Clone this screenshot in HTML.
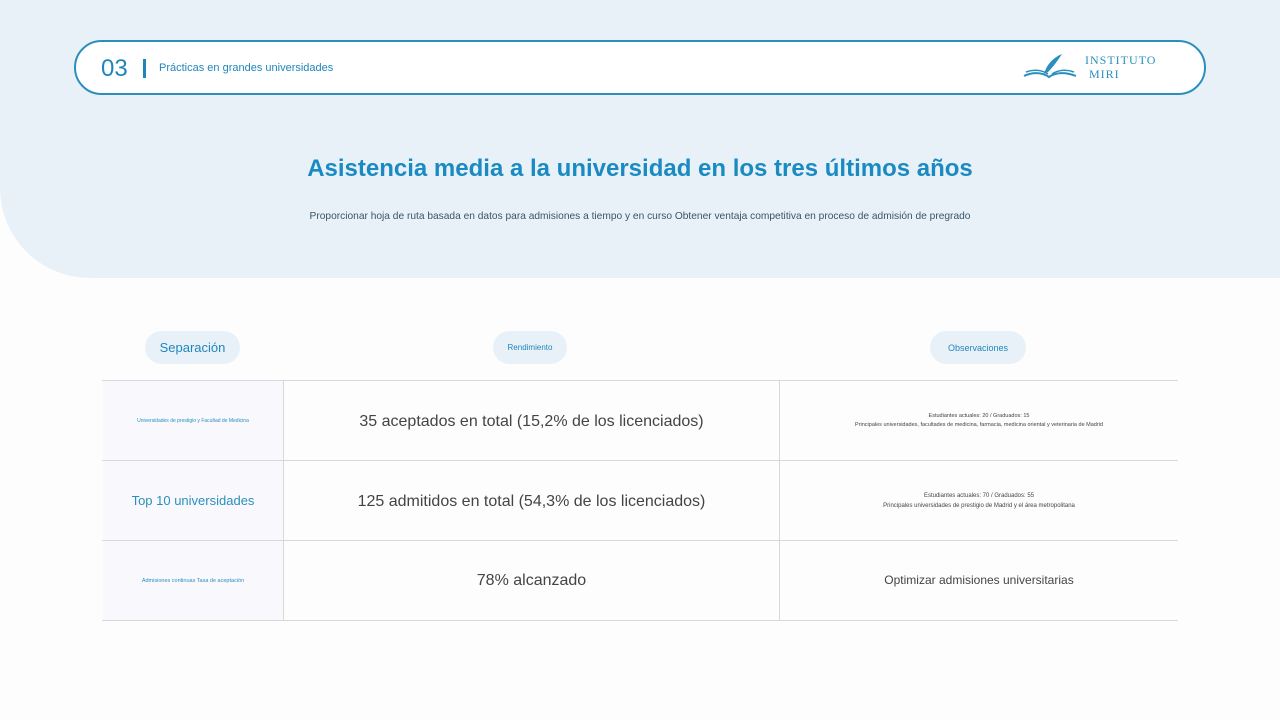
<!DOCTYPE html>
<html><head><meta charset="utf-8"><style>
*{margin:0;padding:0;box-sizing:border-box}
body{width:1280px;height:720px;background:#fdfdfe;font-family:"Liberation Sans",sans-serif;position:relative;overflow:hidden}
.top{position:absolute;left:0;top:0;width:1280px;height:278px;background:#e9f1f8;border-bottom-left-radius:90px}
.hdr{position:absolute;left:74px;top:40px;width:1132px;height:55px;border:2px solid #2b8fbd;border-radius:28px;background:#fff}
.num{position:absolute;left:25px;top:13px;font-size:24px;color:#1f86bb}
.bar{position:absolute;left:67px;top:17px;width:3px;height:19px;background:#1f86bb}
.sub{position:absolute;left:83px;top:20px;font-size:11px;color:#1f86bb}
.logo{position:absolute;left:1085px;top:53px;font-family:"Liberation Serif",serif;font-size:12px;color:#2a8fbd;letter-spacing:1px;line-height:14px}
h1{position:absolute;top:155px;left:0;width:1280px;text-align:center;font-size:24px;color:#1a8bc2;font-weight:bold}
.desc{position:absolute;top:211px;left:0;width:1280px;text-align:center;font-size:10.2px;color:#3a5566}
.pill{position:absolute;top:331px;height:33px;border-radius:17px;background:#e9f1f8;color:#1f86bb;display:flex;align-items:center;justify-content:center}
.line{position:absolute;left:102px;width:1076px;height:1px;background:#d8d8dc}
.v{position:absolute;top:380px;width:1px;height:240px;background:#d8d8dc}
.c1{position:absolute;left:103px;width:180px;height:79px;background:#f9f8fd;display:flex;align-items:center;justify-content:center;color:#2a8fbd;text-align:center}
.cell{position:absolute;display:flex;align-items:center;justify-content:center;text-align:center;color:#444}
</style></head><body>
<div class="top"></div>
<div class="hdr"><div class="num">03</div><div class="bar"></div><div class="sub">Prácticas en grandes universidades</div></div>
<svg style="position:absolute;left:1022px;top:52px" width="56" height="28" viewBox="0 0 56 28">
<path d="M22 22 C24 14 30 6 40 2 C36 8 32 14 26 20 Z" fill="#2a8fbd"/>
<path d="M2 24 C10 20 20 20 27 25 C34 20 44 20 54 24" stroke="#2a8fbd" stroke-width="2" fill="none"/>
<path d="M4 20 C12 17 20 18 26 22 M30 22 C36 18 44 17 52 20" stroke="#2a8fbd" stroke-width="1.5" fill="none"/>
</svg>
<div class="logo">INSTITUTO<br>&nbsp;MIRI</div>
<h1>Asistencia media a la universidad en los tres últimos años</h1>
<div class="desc">Proporcionar hoja de ruta basada en datos para admisiones a tiempo y en curso Obtener ventaja competitiva en proceso de admisión de pregrado</div>
<div class="pill" style="left:145px;width:95px;font-size:13px">Separación</div>
<div class="pill" style="left:493px;width:74px;font-size:8px">Rendimiento</div>
<div class="pill" style="left:930px;width:96px;font-size:9px">Observaciones</div>
<div class="c1" style="top:381px;font-size:5px">Universidades de prestigio y Facultad de Medicina</div>
<div class="c1" style="top:461px;font-size:13px">Top 10 universidades</div>
<div class="c1" style="top:541px;font-size:5.5px">Admisiones continuas Tasa de aceptación</div>
<div class="line" style="top:380px"></div><div class="line" style="top:460px"></div><div class="line" style="top:540px"></div><div class="line" style="top:620px"></div>
<div class="v" style="left:283px"></div><div class="v" style="left:779px"></div>
<div class="cell" style="left:284px;width:495px;top:382px;height:79px;font-size:16px">35 aceptados en total (15,2% de los licenciados)</div>
<div class="cell" style="left:284px;width:495px;top:462px;height:79px;font-size:16px">125 admitidos en total (54,3% de los licenciados)</div>
<div class="cell" style="left:284px;width:495px;top:541px;height:79px;font-size:16px">78% alcanzado</div>
<div class="cell" style="left:780px;width:398px;top:381px;height:79px;font-size:5.5px;line-height:9px">Estudiantes actuales: 20 / Graduados: 15<br>Principales universidades, facultades de medicina, farmacia, medicina oriental y veterinaria de Madrid</div>
<div class="cell" style="left:780px;width:398px;top:461px;height:79px;font-size:6px;line-height:10px">Estudiantes actuales: 70 / Graduados: 55<br>Principales universidades de prestigio de Madrid y el área metropolitana</div>
<div class="cell" style="left:780px;width:398px;top:540px;height:79px;font-size:12px">Optimizar admisiones universitarias</div>
</body></html>
